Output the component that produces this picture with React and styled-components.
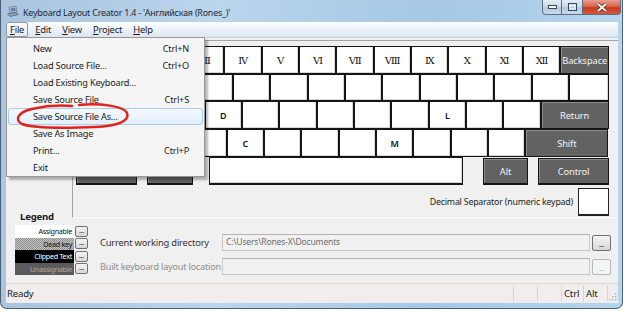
import React from 'react'
import styled, { createGlobalStyle } from 'styled-components'

const UI = `"Noto Sans", "Open Sans", sans-serif`
const ROMAN = `"DejaVu Serif", "Liberation Serif", "Noto Sans CJK JP", serif`

const GlobalStyle = createGlobalStyle`
    html, body {
        margin: 0;
        padding: 0;
        background: #fff;
    }
    body {
        font-family: ${UI};
        color: #1b1b1b;
        letter-spacing: -0.2px;
    }
`;

const Page = styled.div`
    position: relative;
    width: 628px;
    height: 312px;
    overflow: hidden;
`;

const Window = styled.div`
    width: 623px;
    height: 309px;
    box-sizing: border-box;
    display: flex;
    flex-direction: column;
    padding: 0 4px 5px 5px;
    border: 1px solid #4d5e70;
    border-top: none;
    border-radius: 0 0 7px 7px;
    background: linear-gradient(to right, #a9c5df, #bad5ec 35%, #a5c8e5 70%, #b6d5ee);
`;

const TitleBar = styled.div`
    height: 22px;
    display: flex;
    align-items: flex-start;
`;

const TitleIcon = styled.svg`
    margin: 6px 0 0 1px;
    flex: none;
`;

const TitleText = styled.span`
    margin: 6px 0 0 4px;
    font-size: 8.9px;
    line-height: 14px;
    color: #1e2733;
    white-space: nowrap;
`;

const Captions = styled.div`
    margin-left: auto;
    margin-right: -3px;
    display: flex;
`;

const CapButton = styled.div`
    width: ${({ $w }) => $w}px;
    height: 15px;
    box-sizing: border-box;
    border: 1px solid #5d6c7e;
    border-top: none;
    border-left-width: ${({ $first }) => ($first ? 1 : 0)}px;
    border-radius: ${({ $r }) => $r};
    display: flex;
    align-items: center;
    justify-content: center;
    background: ${({ $close }) =>
        $close
            ? 'linear-gradient(#e8a08f, #d9654e 45%, #c53a22 55%, #d5593d)'
            : 'linear-gradient(#e4edf6, #cbdaea 45%, #b3c7dd 55%, #c8dcee)'};
`;

const Client = styled.div`
    flex: 1;
    display: flex;
    flex-direction: column;
    background: #f0f0f0;
`;

const MenuBar = styled.div`
    height: 15px;
    display: flex;
    align-items: center;
    gap: 3px;
    border-bottom: 1px solid #c6d2e0;
    background: linear-gradient(#fcfdfe 0%, #f3f7fc 30%, #dbe5f2 100%);
`;

const MenuTitle = styled.div`
    height: 13px;
    padding: 0 3px;
    border: 1px solid ${({ $active }) => ($active ? '#8c98a8' : 'transparent')};
    border-radius: 2px;
    background: ${({ $active }) => ($active ? 'linear-gradient(#fdfdfe, #e4eaf2)' : 'transparent')};
    font-size: 9.4px;
    line-height: 13px;
    u { text-decoration-thickness: 1px; text-underline-offset: 1px; }
`;

const Main = styled.div`
    flex: 1;
    display: flex;
    flex-direction: column;
`;

const TopRow = styled.div`
    height: 178px;
    margin-top: 2px;
    display: flex;
`;

const LeftCol = styled.div`
    width: 66px;
    flex: none;
    display: flex;
    flex-direction: column;
    justify-content: flex-end;
`;

const LegendTitle = styled.div`
    padding-left: 14px;
    margin-bottom: -5px;
    font-size: 9.6px;
    line-height: 12px;
    font-weight: 700;
`;

const Panel = styled.div`
    flex: 1;
    box-sizing: border-box;
    padding: 5px 0 0 2px;
    border-top: 1px solid #a5a5a5;
    border-left: 1px solid #a5a5a5;
    border-bottom: 1px solid #fbfbfb;
`;

const Keyboard = styled.div`
    width: 534px;
    display: flex;
    flex-direction: column;
`;

const KeyRow = styled.div`
    height: ${({ $h }) => $h}px;
    display: flex;
`;

const Key = styled.div`
    flex: none;
    box-sizing: border-box;
    width: ${({ $w }) => $w}px;
    margin-left: ${({ $ml = 0 }) => $ml}px;
    margin-top: ${({ $mt = 0 }) => $mt}px;
    display: flex;
    align-items: center;
    justify-content: center;
    border: 1px solid #151515;
    border-bottom-width: ${({ $thick }) => ($thick ? 2 : 1)}px;
    background: ${({ $dark }) => ($dark ? '#626262' : '#fff')};
    box-shadow: ${({ $dark }) => ($dark ? 'inset 1px 1px #8c8c8c' : 'inset -1px -1px #d8d8d8')};
    color: ${({ $dark }) => ($dark ? '#f4f4f4' : '#111')};
    font-family: ${({ $roman }) => ($roman ? ROMAN : UI)};
    font-size: ${({ $roman, $dark }) => ($roman ? 10 : $dark ? 9.3 : 9)}px;
    font-weight: ${({ $dark, $roman }) => ($dark || $roman ? 400 : 600)};
    letter-spacing: ${({ $roman }) => ($roman ? '-0.6px' : '-0.1px')};
    white-space: nowrap;
`;

const DecimalRow = styled.div`
    width: 534px;
    height: 28px;
    margin-top: 3px;
    display: flex;
    align-items: center;
    justify-content: flex-end;
    gap: 5px;
    font-size: 8.8px;
`;

const DecimalBox = styled.div`
    width: 31px;
    height: 28px;
    box-sizing: border-box;
    border: 1px solid #222;
    border-bottom-width: 2px;
    background: #fff;
`;

const BottomRow = styled.div`
    height: 65px;
    box-sizing: border-box;
    padding: 7px 6px 0 9px;
    display: flex;
`;

const LegendList = styled.div`
    display: flex;
    flex-direction: column;
`;

const LegendItem = styled.div`
    height: 12.5px;
    display: flex;
    align-items: center;
`;

const Swatch = styled.div`
    width: 59px;
    height: 100%;
    box-sizing: border-box;
    padding-right: 2px;
    text-align: right;
    font-size: 7.2px;
    line-height: 12.5px;
    letter-spacing: -0.3px;
    white-space: nowrap;
    overflow: hidden;
    color: ${({ $fg }) => $fg};
    background: ${({ $bg }) => $bg};
`;

const DotsButton = styled.div`
    width: ${({ $w = 13 }) => $w}px;
    height: ${({ $h = 11 }) => $h}px;
    margin-left: ${({ $ml = 0 }) => $ml}px;
    box-sizing: border-box;
    border: 1px solid ${({ $off }) => ($off ? '#b4b8bc' : '#707070')};
    border-radius: 2px;
    background: ${({ $off }) => ($off ? '#f4f4f4' : 'linear-gradient(#f4f4f4, #e6e6e6 50%, #d6d6d6)')};
    color: ${({ $off }) => ($off ? '#a8a8a8' : '#222')};
    font-size: 7px;
    line-height: 7px;
    display: flex;
    justify-content: center;
    align-items: flex-end;
    padding-bottom: 2px;
`;

const Form = styled.div`
    flex: 1;
    margin-left: 12px;
    padding-top: 9px;
    display: grid;
    grid-template-columns: 122px 1fr 20px;
    grid-auto-rows: 17px;
    row-gap: 7px;
    align-items: center;
`;

const FieldLabel = styled.span`
    font-size: ${({ $off }) => ($off ? 9.1 : 9.4)}px;
    color: ${({ $off }) => ($off ? '#8e8e8e' : '#333')};
    white-space: nowrap;
`;

const Field = styled.div`
    height: 17px;
    box-sizing: border-box;
    margin-right: 2px;
    padding-left: 3px;
    border: 1px solid #c7c7c7;
    border-top-color: #b3b3b3;
    background: #f1f1f1;
    color: #6e6e6e;
    font-size: 8.6px;
    line-height: 15px;
    white-space: nowrap;
    overflow: hidden;
`;

const StatusBar = styled.div`
    height: 20px;
    box-sizing: border-box;
    border-top: 1px solid #d9d6d6;
    background: #f1eded;
    display: flex;
    font-size: 9.6px;
`;

const StatusCell = styled.div`
    width: ${({ $w }) => ($w ? `${$w}px` : 'auto')};
    flex: ${({ $w }) => ($w ? 'none' : 1)};
    box-sizing: border-box;
    padding-left: ${({ $pl = 2 }) => $pl}px;
    margin: 2px 0;
    border-left: ${({ $sep }) => ($sep ? '1px solid #d6d3d3' : 'none')};
    display: flex;
    align-items: center;
    position: relative;
`;

const Grip = styled.svg`
    position: absolute;
    right: 1px;
    bottom: 0;
`;

const Dropdown = styled.div`
    position: absolute;
    left: 6px;
    top: 37px;
    width: 199px;
    box-sizing: border-box;
    padding: 2px 1px 0;
    border: 1px solid #979797;
    background: #f5f5f5;
    box-shadow: 3px 3px 2px rgba(0, 0, 0, 0.28);
`;

const MenuEntry = styled.div`
    height: 17px;
    box-sizing: border-box;
    padding: 0 13px 0 24px;
    display: flex;
    align-items: center;
    justify-content: space-between;
    border: 1px solid ${({ $hot }) => ($hot ? '#a9cdef' : 'transparent')};
    border-radius: 3px;
    background: ${({ $hot }) => ($hot ? 'linear-gradient(#f4f9fe, #e3effc)' : 'transparent')};
    font-size: 9.2px;
    white-space: nowrap;
`;

const Annotation = styled.svg`
    position: absolute;
    left: 0;
    top: 0;
    pointer-events: none;
`;

const U = 37.33

// the first keys of the number row sit under the open File menu
const row1 = ['', '', '', 'Ⅲ', 'Ⅳ', 'Ⅴ', 'Ⅵ', 'Ⅶ', 'Ⅷ', 'Ⅸ', 'Ⅹ', 'Ⅺ', 'Ⅻ']
const row3 = ['', '', 'D', '', '', '', '', '', 'L', '', '']
const row4 = ['', '', 'C', '', '', '', 'M', '', '', '']

const menuItems = [
    ['New', 'Ctrl+N'],
    ['Load Source File...', 'Ctrl+O'],
    ['Load Existing Keyboard...', ''],
    ['Save Source File', 'Ctrl+S'],
    ['Save Source File As...', ''],
    ['Save As Image', ''],
    ['Print...', 'Ctrl+P'],
    ['Exit', ''],
]

const legend = [
    ['Assignable', '#fff', '#111'],
    ['Dead key', 'repeating-conic-gradient(#8e8e8e 0 25%, #c4c4c4 0 50%) 0 0 / 2px 2px', '#111'],
    ['Clipped Text', '#000', '#fff'],
    ['Unassignable', '#5b5b5b', '#a9a9a9'],
]

const App = () => {
    return (
        <Page>
            <GlobalStyle />
            <Window>
                <TitleBar>
                    <TitleIcon width="12" height="11" viewBox="0 0 12 11">
                        <path d="M2 1 L9 0.5 L10 6 L3 7 Z" fill="#c9ced6" stroke="#6d7682" strokeWidth="0.8" />
                        <path d="M3.5 2 L8.3 1.7 L8.9 5 L4 5.6 Z" fill="#4e86c8" />
                        <path d="M0.5 8 L9 6.5 L11.5 8.5 L3 10.5 Z" fill="#8fa3b8" stroke="#4f5d6c" strokeWidth="0.7" />
                    </TitleIcon>
                    <TitleText>Keyboard Layout Creator 1.4 - 'Английская (Rones_)'</TitleText>
                    <Captions>
                        <CapButton $w={20} $first $r="0 0 0 4px">
                            <svg width="9" height="4" viewBox="0 0 9 4">
                                <rect x="0.5" y="0.5" width="8" height="3" fill="#fff" stroke="#38495c" strokeWidth="1" />
                            </svg>
                        </CapButton>
                        <CapButton $w={21} $r="0">
                            <svg width="9" height="8" viewBox="0 0 9 8">
                                <rect x="0.5" y="0.5" width="8" height="7" fill="none" stroke="#38495c" strokeWidth="1" />
                                <rect x="2" y="2.5" width="5" height="3.5" fill="none" stroke="#fff" strokeWidth="1" />
                            </svg>
                        </CapButton>
                        <CapButton $w={38} $close $r="0 0 4px 0">
                            <svg width="12" height="9" viewBox="0 0 12 9">
                                <path d="M2 1 L10 8 M10 1 L2 8" stroke="#5a1a10" strokeWidth="3.2" />
                                <path d="M2 1 L10 8 M10 1 L2 8" stroke="#fff" strokeWidth="2" />
                            </svg>
                        </CapButton>
                    </Captions>
                </TitleBar>
                <Client>
                    <MenuBar>
                        <MenuTitle $active><u>F</u>ile</MenuTitle>
                        <MenuTitle><u>E</u>dit</MenuTitle>
                        <MenuTitle><u>V</u>iew</MenuTitle>
                        <MenuTitle><u>P</u>roject</MenuTitle>
                        <MenuTitle><u>H</u>elp</MenuTitle>
                    </MenuBar>
                    <Main>
                        <TopRow>
                            <LeftCol>
                                <LegendTitle>Legend</LegendTitle>
                            </LeftCol>
                            <Panel>
                                <Keyboard>
                                    <KeyRow $h={28}>
                                        {row1.map((k, i) => (
                                            <Key key={i} $w={U} $roman>{k}</Key>
                                        ))}
                                        <Key $w={49} $dark>Backspace</Key>
                                    </KeyRow>
                                    <KeyRow $h={27}>
                                        <Key $w={46} $dark />
                                        {Array.from({ length: 12 }).map((_, i) => (
                                            <Key key={i} $w={U} />
                                        ))}
                                        <Key $w={40} />
                                    </KeyRow>
                                    <KeyRow $h={28}>
                                        <Key $w={55} $dark />
                                        {row3.map((k, i) => (
                                            <Key key={i} $w={U}>{k}</Key>
                                        ))}
                                        <Key $w={68} $dark>Return</Key>
                                    </KeyRow>
                                    <KeyRow $h={28}>
                                        <Key $w={77} $dark />
                                        {row4.map((k, i) => (
                                            <Key key={i} $w={U}>{k}</Key>
                                        ))}
                                        <Key $w={83} $dark>Shift</Key>
                                    </KeyRow>
                                    <KeyRow $h={28}>
                                        <Key $w={61} $ml={1} $mt={1} $dark $thick />
                                        <Key $w={46} $ml={10} $mt={1} $dark $thick />
                                        <Key $w={254} $ml={16} $thick />
                                        <Key $w={45} $ml={20} $mt={1} $dark $thick>Alt</Key>
                                        <Key $w={71} $ml={10} $mt={1} $dark $thick>Control</Key>
                                    </KeyRow>
                                </Keyboard>
                                <DecimalRow>
                                    Decimal Separator (numeric keypad)
                                    <DecimalBox />
                                </DecimalRow>
                            </Panel>
                        </TopRow>
                        <BottomRow>
                            <LegendList>
                                {legend.map(([label, bg, fg]) => (
                                    <LegendItem key={label}>
                                        <Swatch $bg={bg} $fg={fg}>{label}</Swatch>
                                        <DotsButton $ml={1}>...</DotsButton>
                                    </LegendItem>
                                ))}
                            </LegendList>
                            <Form>
                                <FieldLabel>Current working directory</FieldLabel>
                                <Field>C:\Users\Rones-X\Documents</Field>
                                <DotsButton $w={19} $h={16}>...</DotsButton>
                                <FieldLabel $off>Built keyboard layout location</FieldLabel>
                                <Field />
                                <DotsButton $w={19} $h={16} $off>...</DotsButton>
                            </Form>
                        </BottomRow>
                    </Main>
                    <StatusBar>
                        <StatusCell $pl={1}>Ready</StatusCell>
                        <StatusCell $w={24} $sep />
                        <StatusCell $w={24} $sep />
                        <StatusCell $w={22} $sep>Ctrl</StatusCell>
                        <StatusCell $w={24} $sep>Alt</StatusCell>
                        <StatusCell $w={11} $sep>
                            <Grip width="8" height="8" viewBox="0 0 8 8">
                                <g fill="#b8b4b4">
                                    <rect x="6" y="0" width="1.5" height="1.5" />
                                    <rect x="3" y="3" width="1.5" height="1.5" />
                                    <rect x="6" y="3" width="1.5" height="1.5" />
                                    <rect x="0" y="6" width="1.5" height="1.5" />
                                    <rect x="3" y="6" width="1.5" height="1.5" />
                                    <rect x="6" y="6" width="1.5" height="1.5" />
                                </g>
                            </Grip>
                        </StatusCell>
                    </StatusBar>
                </Client>
            </Window>
            <Dropdown>
                {menuItems.map(([label, shortcut], i) => (
                    <MenuEntry key={label} $hot={i === 4}>
                        <span>{label}</span>
                        <span>{shortcut}</span>
                    </MenuEntry>
                ))}
            </Dropdown>
            <Annotation width="628" height="312" viewBox="0 0 628 312">
                <path
                    d="M79 105 C100 103, 124 106, 127 113 C130 121, 118 126, 95 127 C70 128, 35 129, 22 124 C14 120, 18 112, 32 109 C45 106, 60 105, 72 106"
                    fill="none"
                    stroke="#e3211d"
                    strokeWidth="2.5"
                    strokeLinecap="round"
                />
            </Annotation>
        </Page>
    )
}

export default App
